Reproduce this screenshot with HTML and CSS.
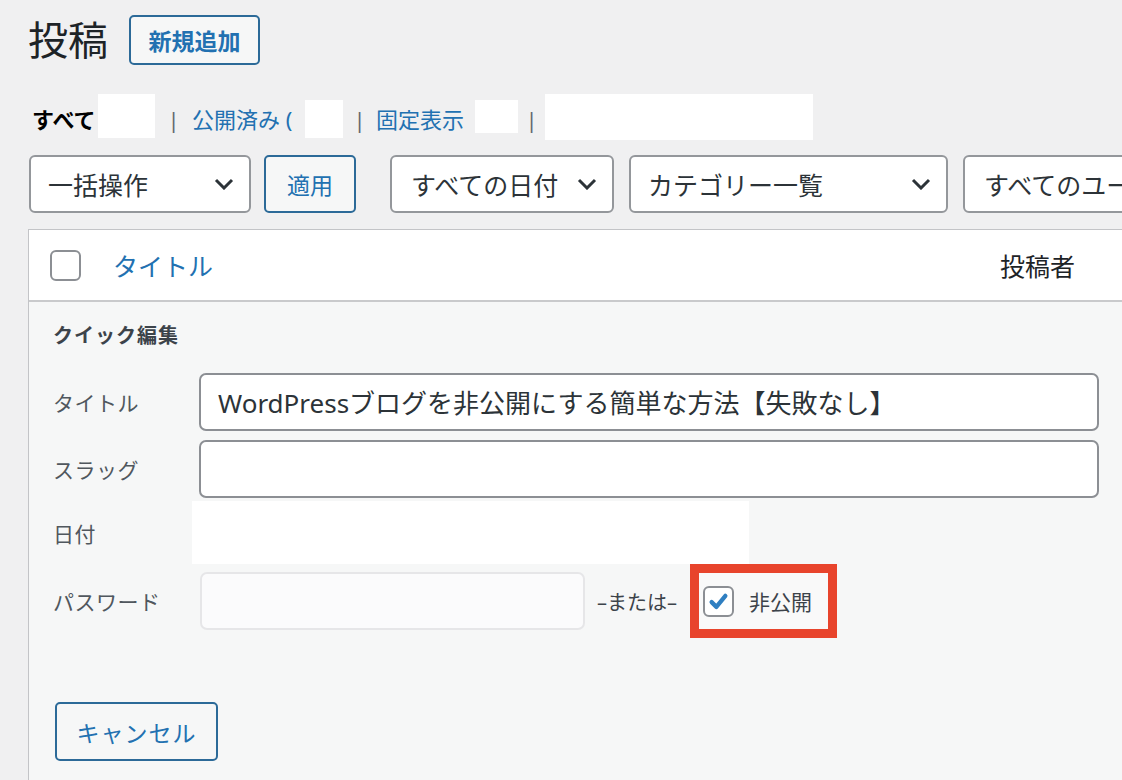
FILE: index.html
```html
<!DOCTYPE html>
<html lang="ja">
<head>
<meta charset="utf-8">
<title>投稿</title>
<link rel="stylesheet" href="styles.css">
</head>
<body>
<div class="page">
  <div class="heading">
    <h1 class="heading-title">投稿</h1>
    <a class="btn btn-add">新規追加</a>
  </div>

  <ul class="views">
    <li class="view-current">すべて</li>
    <li class="mask mask-1"></li>
    <li class="sep sep-1">|</li>
    <li class="view-link view-pub">公開済み (</li>
    <li class="mask mask-2"></li>
    <li class="sep sep-2">|</li>
    <li class="view-link view-sticky">固定表示</li>
    <li class="mask mask-3"></li>
    <li class="sep sep-3">|</li>
    <li class="mask mask-4"></li>
  </ul>

  <div class="filters">
    <div class="select sel-bulk"><span>一括操作</span><svg class="chev" viewBox="0 0 20 12"><path d="M2 2l8 8 8-8"/></svg></div>
    <a class="btn btn-apply">適用</a>
    <div class="select sel-date"><span>すべての日付</span><svg class="chev" viewBox="0 0 20 12"><path d="M2 2l8 8 8-8"/></svg></div>
    <div class="select sel-cat"><span>カテゴリー一覧</span><svg class="chev" viewBox="0 0 20 12"><path d="M2 2l8 8 8-8"/></svg></div>
    <div class="select sel-user"><span>すべてのユーザー</span><svg class="chev" viewBox="0 0 20 12"><path d="M2 2l8 8 8-8"/></svg></div>
  </div>

  <div class="table">
    <div class="thead">
      <span class="cb"></span>
      <a class="th-title">タイトル</a>
      <span class="th-author">投稿者</span>
    </div>
    <div class="quick">
      <div class="quick-heading">クイック編集</div>
      <div class="row row-title">
        <span class="label">タイトル</span>
        <div class="input">WordPressブログを非公開にする簡単な方法【失敗なし】</div>
      </div>
      <div class="row row-slug">
        <span class="label">スラッグ</span>
        <div class="input"></div>
      </div>
      <div class="row row-date">
        <span class="label">日付</span>
        <div class="date-mask"></div>
      </div>
      <div class="row row-pass">
        <span class="label">パスワード</span>
        <div class="input input-pass"></div>
        <span class="or">–または–</span>
        <div class="private">
          <span class="cb cb-checked"><svg viewBox="0 0 20 20"><path d="M4.5 10.5l3.8 3.8L15.5 5.5"/></svg></span>
          <span class="private-text">非公開</span>
        </div>
      </div>
      <div class="actions">
        <a class="btn btn-cancel">キャンセル</a>
      </div>
    </div>
  </div>
</div>
</body>
</html>
```

FILE: styles.css
```css
html, body {
  margin: 0;
  padding: 0;
  background: #f0f0f1;
}
body {
  font-family: "Noto Sans", "Noto Sans CJK JP", sans-serif;
  color: #1d2327;
}
.page {
  box-sizing: border-box;
  width: 1122px;
  height: 780px;
  overflow: hidden;
  padding-left: 28px;
}

/* heading */
.heading {
  display: flex;
  align-items: center;
  margin-top: 15px;
  height: 50px;
}
.heading-title {
  margin: 0;
  font-size: 40px;
  font-weight: 400;
  line-height: 50px;
  color: #1d2327;
}
.btn {
  display: flex;
  align-items: center;
  justify-content: center;
  flex: none;
  box-sizing: border-box;
  border: 2px solid #2c6a98;
  border-radius: 5px;
  background: #f6f7f7;
  color: #2271b1;
  text-decoration: none;
  white-space: nowrap;
}
.btn-add {
  margin-left: 21px;
  width: 131px;
  height: 50px;
  font-size: 23px;
  font-weight: 600;
}

/* views */
.views {
  list-style: none;
  margin: 29px 0 0 4px;
  padding: 0;
  display: flex;
  align-items: flex-start;
  height: 46px;
  font-size: 22px;
}
.views li {
  flex: none;
  line-height: 50px;
  white-space: nowrap;
}
.view-current {
  font-weight: 700;
  color: #000;
  width: 66px;
}
.view-link {
  color: #2271b1;
}
.view-pub { width: 113px; }
.view-sticky { width: 99px; }
.mask {
  background: #fff;
}
.mask-1 {
  width: 57px;
  height: 44px;
}
.mask-2 {
  width: 38px;
  height: 38px;
  margin-top: 6px;
}
.mask-3 {
  width: 43px;
  height: 33px;
  margin-top: 6px;
}
.mask-4 {
  width: 268px;
  height: 46px;
}
.sep {
  color: #646970;
  text-align: center;
}
.sep-1 { width: 37px; }
.sep-2 { width: 33px; }
.sep-3 { width: 27px; }

/* filters */
.filters {
  display: flex;
  align-items: center;
  margin-top: 15px;
  margin-left: 1px;
  height: 58px;
}
.select {
  box-sizing: border-box;
  height: 58px;
  display: flex;
  align-items: center;
  justify-content: space-between;
  background: #fff;
  border: 2px solid #94979b;
  border-radius: 6px;
  padding: 0 15px 0 17px;
  font-size: 25px;
  color: #2c3338;
  white-space: nowrap;
  overflow: hidden;
  flex: none;
}
.chev {
  width: 20px;
  height: 12px;
  flex: none;
  fill: none;
  stroke: #2c3338;
  stroke-width: 3;
}
.sel-bulk { width: 222px; }
.btn-apply {
  margin-left: 13px;
  width: 92px;
  height: 58px;
  font-size: 23px;
  font-weight: 400;
}
.sel-date {
  margin-left: 34px;
  width: 224px;
  padding-left: 19px;
}
.sel-date .chev { margin-left: 12px; }
.sel-cat {
  margin-left: 15px;
  width: 319px;
}
.sel-user {
  margin-left: 15px;
  width: 260px;
  padding-left: 19px;
}

/* table */
.table {
  margin-top: 16px;
  width: 1200px;
  border: 1px solid #c3c4c7;
  border-right: none;
  border-bottom: none;
  background: #fff;
}
.thead {
  display: flex;
  align-items: center;
  height: 70px;
  border-bottom: 2px solid #c9cacc;
  padding-left: 21px;
}
.cb {
  box-sizing: border-box;
  width: 31px;
  height: 31px;
  border: 2px solid #8c8f94;
  border-radius: 6px;
  background: #fff;
  flex: none;
  display: flex;
  align-items: center;
  justify-content: center;
}
.th-title {
  color: #2271b1;
  margin-left: 32px;
  width: 887px;
  font-size: 25px;
  flex: none;
}
.th-author {
  color: #1d2327;
  font-size: 25px;
}

/* quick edit */
.quick {
  background: #f6f7f7;
  padding: 19px 0 0 24px;
  height: 500px;
  box-sizing: border-box;
}
.quick-heading {
  font-size: 20px;
  font-weight: 700;
  line-height: 30px;
  color: #3c434a;
  letter-spacing: 1px;
}
.row {
  display: flex;
  align-items: center;
}
.label {
  width: 146px;
  flex: none;
  font-size: 21px;
  color: #50575e;
  letter-spacing: 0.5px;
}
.input {
  box-sizing: border-box;
  width: 900px;
  height: 58px;
  border: 2px solid #8c8f94;
  border-radius: 7px;
  background: #fff;
  display: flex;
  align-items: center;
  padding-left: 17px;
  font-size: 26px;
  color: #2c3338;
  white-space: nowrap;
  overflow: hidden;
  flex: none;
}
.row-title {
  margin-top: 22px;
}
.row-slug {
  margin-top: 9px;
}
.row-date {
  margin-top: 3px;
  height: 63px;
}
.date-mask {
  margin-left: -7px;
  width: 557px;
  height: 63px;
  background: #fff;
}
.row-pass {
  margin-top: 8px;
  height: 58px;
}
.input-pass {
  width: 385px;
  margin-left: 1px;
  border: 2px solid #e6e6e8;
  background: #fbfbfc;
}
.or {
  margin-left: 12px;
  font-size: 20px;
  color: #3c434a;
  white-space: nowrap;
  width: 93px;
  flex: none;
}
.private {
  box-sizing: border-box;
  height: 74px;
  width: 147px;
  border: 9px solid #e8442c;
  display: flex;
  align-items: center;
  padding-left: 4px;
  background: #f9f9f9;
  flex: none;
}
.cb-checked svg {
  width: 25px;
  height: 25px;
  fill: none;
  stroke: #2f7fc1;
  stroke-width: 3.4;
  stroke-linecap: round;
  stroke-linejoin: round;
}
.private-text {
  margin-left: 15px;
  font-size: 21px;
  color: #3c434a;
}
.actions {
  margin-top: 72px;
  margin-left: 2px;
}
.btn-cancel {
  width: 163px;
  height: 59px;
  font-size: 23px;
  letter-spacing: 1px;
}
```
